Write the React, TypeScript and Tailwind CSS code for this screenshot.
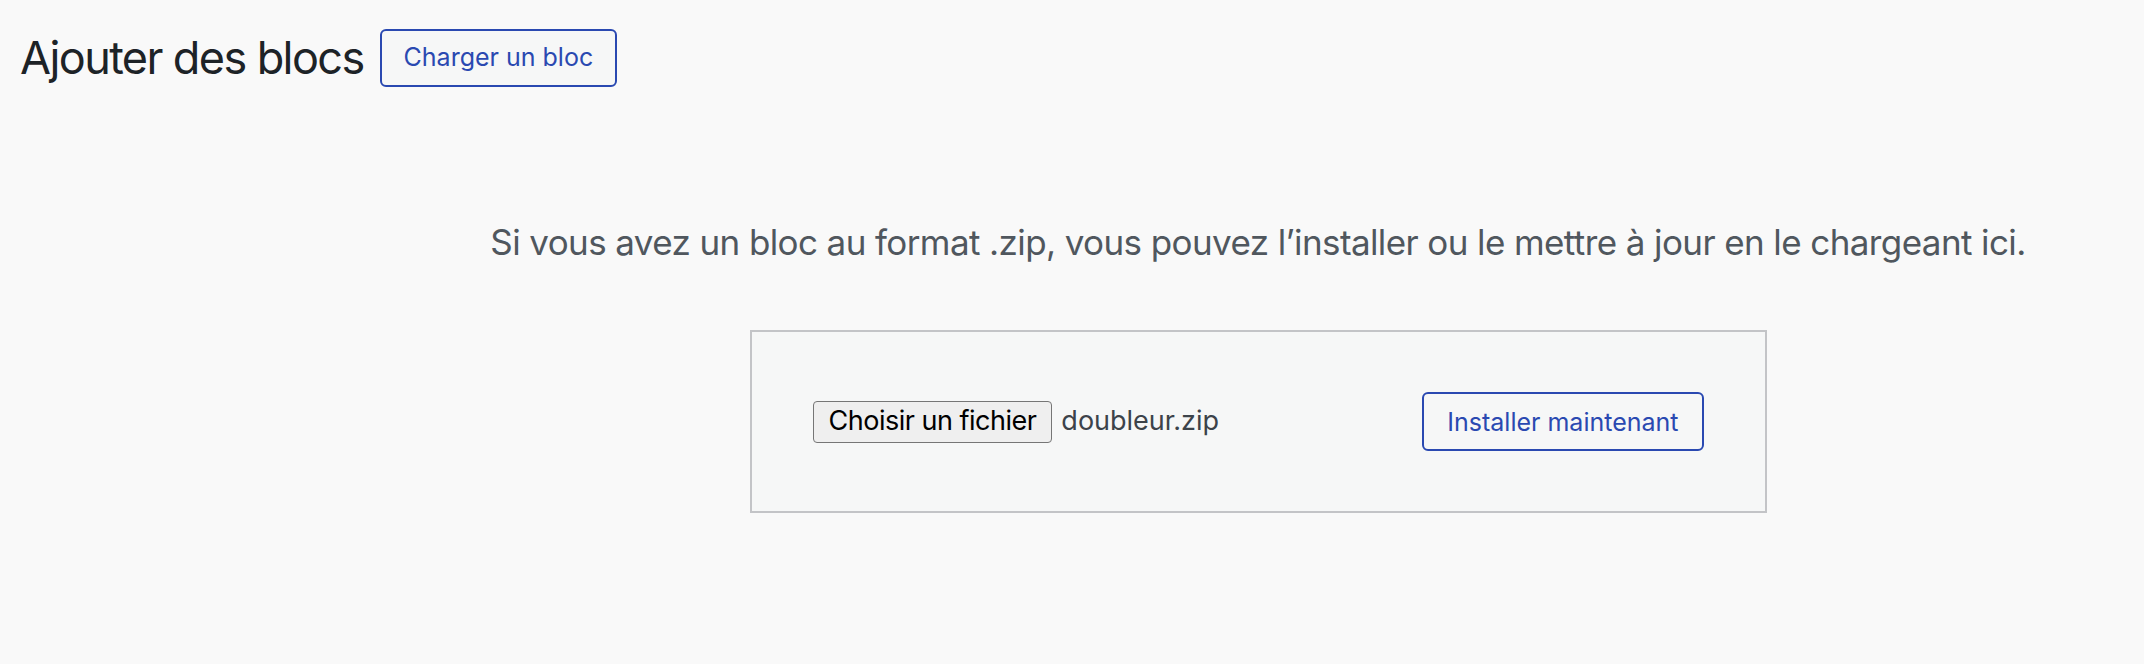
import React from 'react';

const blue = 'border-[#2a49b1] text-[#2a49b1]';

export default function App() {
  return (
    <div className="min-h-screen bg-[#f9f9f9] font-['Inter',sans-serif]">
      <div className="flex items-center pl-[20px] pt-[29px]">
        <h1 className="text-[45px] leading-[58px] tracking-[-1.6px] text-[#1d2327]">Ajouter des blocs</h1>
        <button
          className={`ml-[16px] h-[58px] px-[22px] border-2 rounded-[6px] bg-[#f6f7f7] text-[25px] ${blue}`}
        >
          Charger un bloc
        </button>
      </div>

      <div className="pl-[372px] flex flex-col items-center">
        <p className="mt-[131px] text-[35px] leading-[48px] tracking-[-0.6px] text-[#50575e]">
          Si vous avez un bloc au format .zip, vous pouvez l’installer ou le mettre à jour en le chargeant ici.
        </p>

        <div className="mt-[64px] w-[1017px] h-[183px] border-2 border-[#c3c4c7] bg-[#f6f7f7] flex items-center justify-between px-[61px]">
          <div className="flex items-center gap-[9px]">
            <span className="h-[42px] flex items-center px-[15px] border-[1.5px] border-[#767676] rounded-[4px] bg-[#efefef] text-[27px] tracking-[-0.5px] text-black">
              Choisir un fichier
            </span>
            <span className="text-[27px] text-[#3c434a]">doubleur.zip</span>
          </div>
          <button className={`h-[59px] pt-[3px] px-[23px] border-2 rounded-[6px] bg-[#f6f7f7] text-[25px] ${blue}`}>
            Installer maintenant
          </button>
        </div>
      </div>
    </div>
  );
}
